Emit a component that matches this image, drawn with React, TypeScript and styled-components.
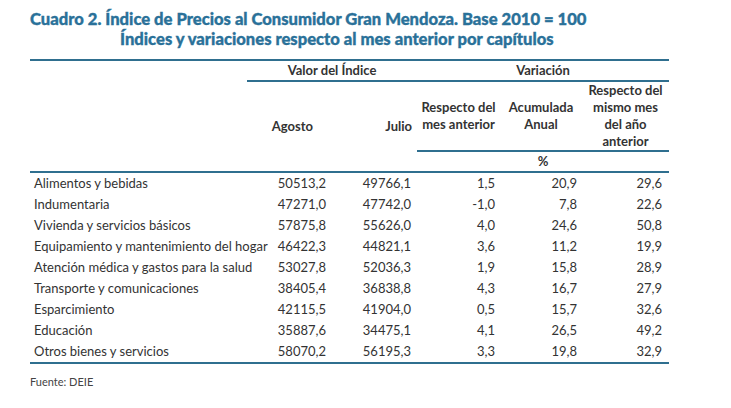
import React from "react";
import styled, { createGlobalStyle } from "styled-components";

const Global = createGlobalStyle`
  html, body { margin: 0; padding: 0; background: #ffffff; }
  body { font-family: Lato, "Liberation Sans", sans-serif; color: #333333; }
`;

const Page = styled.div`
  width: 731px;
  height: 408px;
  padding: 9px 0 0 30px;
  box-sizing: border-box;
  background: #ffffff;
`;

const Title = styled.h1`
  margin: 0 0 10px 0;
  font-family: Lato, "Open Sans", sans-serif;
  font-weight: 900;
  font-size: 16.6px;
  line-height: 20px;
  color: #2a7199;
  -webkit-text-stroke: 0.35px #2a7199;
  white-space: nowrap;
`;

const TitleLine = styled.span<{ $indent?: number }>`
  display: block;
  padding-left: ${(p) => p.$indent ?? 0}px;
`;

const Table = styled.table`
  border-collapse: collapse;
  table-layout: fixed;
  width: 639px;
  border-top: 2px solid #2f6f8f;
  font-size: 13px;
`;

const HeadCell = styled.th<{ $line?: boolean; $align?: string; $pr?: number; $h?: number; $valign?: string }>`
  font-weight: 700;
  font-size: 13px;
  color: #333333;
  line-height: 17px;
  padding: 0 ${(p) => p.$pr ?? 0}px 0 0;
  text-align: ${(p) => p.$align ?? "center"};
  vertical-align: ${(p) => p.$valign ?? "middle"};
  height: ${(p) => (p.$h ? `${p.$h}px` : "auto")};
  border-bottom: ${(p) => (p.$line ? "2px solid #2f6f8f" : "none")};
`;

const Body = styled.tbody`
  tr:last-child td { border-bottom: 2px solid #2f6f8f; }
`;

const Row = styled.tr`
  height: 21px;
`;

const LabelCell = styled.td`
  padding: 0 0 0 4px;
  line-height: 21px;
  white-space: nowrap;
  text-align: left;
`;

const NumCell = styled.td<{ $pr: number }>`
  padding: 0 ${(p) => p.$pr}px 0 0;
  line-height: 21px;
  text-align: right;
  white-space: nowrap;
`;

const Source = styled.div`
  margin-top: 11px;
  font-size: 11px;
  color: #444444;
`;

const rows: [string, string, string, string, string, string][] = [
  ["Alimentos y bebidas", "50513,2", "49766,1", "1,5", "20,9", "29,6"],
  ["Indumentaria", "47271,0", "47742,0", "-1,0", "7,8", "22,6"],
  ["Vivienda y servicios básicos", "57875,8", "55626,0", "4,0", "24,6", "50,8"],
  ["Equipamiento y mantenimiento del hogar", "46422,3", "44821,1", "3,6", "11,2", "19,9"],
  ["Atención médica y gastos para la salud", "53027,8", "52036,3", "1,9", "15,8", "28,9"],
  ["Transporte y comunicaciones", "38405,4", "36838,8", "4,3", "16,7", "27,9"],
  ["Esparcimiento", "42115,5", "41904,0", "0,5", "15,7", "32,6"],
  ["Educación", "35887,6", "34475,1", "4,1", "26,5", "49,2"],
  ["Otros bienes y servicios", "58070,2", "56195,3", "3,3", "19,8", "32,9"],
];

const pads = [6, 6, 5, 5, 7];

export default function App() {
  return (
    <Page>
      <Global />
      <Title>
        <TitleLine>Cuadro 2. Índice de Precios al Consumidor Gran Mendoza. Base 2010 = 100</TitleLine>
        <TitleLine $indent={90}>Índices y variaciones respecto al mes anterior por capítulos</TitleLine>
      </Title>
      <Table>
        <colgroup>
          <col style={{ width: 217 }} />
          <col style={{ width: 85 }} />
          <col style={{ width: 85 }} />
          <col style={{ width: 83 }} />
          <col style={{ width: 82 }} />
          <col style={{ width: 87 }} />
        </colgroup>
        <thead>
          <tr>
            <HeadCell rowSpan={3} $line $h={19} />
            <HeadCell colSpan={2} $line $h={19}>Valor del Índice</HeadCell>
            <HeadCell colSpan={3} $line $h={19}>Variación</HeadCell>
          </tr>
          <tr>
            <HeadCell rowSpan={2} $line $align="right" $pr={19}>Agosto</HeadCell>
            <HeadCell rowSpan={2} $line $align="right" $pr={5}>Julio</HeadCell>
            <HeadCell $line $h={66} $valign="bottom" $pr={0}>Respecto del<br />mes anterior<br />&nbsp;</HeadCell>
            <HeadCell $line $h={66} $valign="bottom" $pr={0}>Acumulada<br />Anual<br />&nbsp;</HeadCell>
            <HeadCell $line $h={66} $valign="bottom" $pr={0}>Respecto del<br />mismo mes<br />del año<br />anterior</HeadCell>
          </tr>
          <tr>
            <HeadCell colSpan={3} $line $h={19}>%</HeadCell>
          </tr>
        </thead>
        <Body>
          {rows.map((r) => (
            <Row key={r[0]}>
              <LabelCell>{r[0]}</LabelCell>
              {r.slice(1).map((v, i) => (
                <NumCell key={i} $pr={pads[i]}>{v}</NumCell>
              ))}
            </Row>
          ))}
        </Body>
      </Table>
      <Source>Fuente: DEIE</Source>
    </Page>
  );
}
